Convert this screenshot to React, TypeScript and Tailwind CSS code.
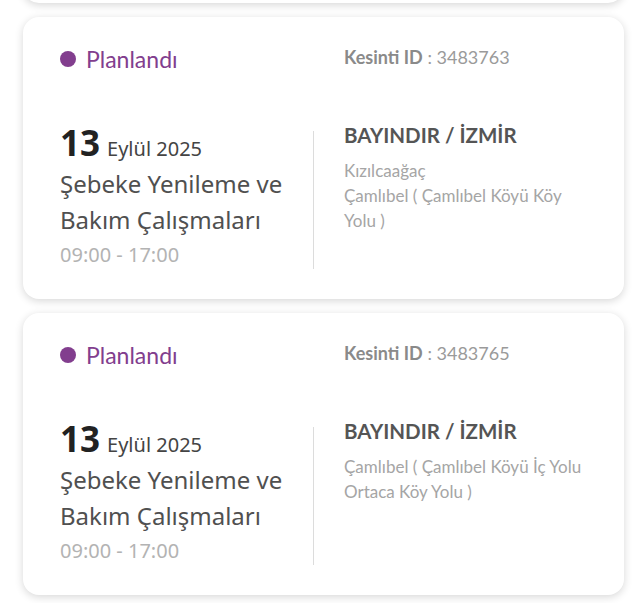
const outages = [
  {
    id: "3483763",
    day: "13",
    monthYear: "Eylül 2025",
    title: "Şebeke Yenileme ve Bakım Çalışmaları",
    hours: "09:00 - 17:00",
    place: "BAYINDIR / İZMİR",
    lines: ["Kızılcaağaç", "Çamlıbel ( Çamlıbel Köyü Köy Yolu )"],
  },
  {
    id: "3483765",
    day: "13",
    monthYear: "Eylül 2025",
    title: "Şebeke Yenileme ve Bakım Çalışmaları",
    hours: "09:00 - 17:00",
    place: "BAYINDIR / İZMİR",
    lines: ["Çamlıbel ( Çamlıbel Köyü İç Yolu Ortaca Köy Yolu )"],
  },
];

const geo = { fontFamily: '"Lato", "Noto Sans", sans-serif' };
const hum = { fontFamily: '"Noto Sans", "Open Sans", sans-serif' };

type Outage = (typeof outages)[number];

const OutageCard = ({ o }: { o: Outage }) => (
  <div className="w-[601px] h-[282px] rounded-2xl bg-white shadow-[0_2px_8px_rgba(0,0,0,0.16)] pl-[37px] pr-[30px] pt-[29px]">
    <div className="grid grid-cols-[284px_1fr]">
      <div className="flex items-center gap-[10px] h-[26px]" style={geo}>
        <span className="w-4 h-4 rounded-full bg-[#823e8e]" />
        <span className="text-[23px] text-[#823e8e] leading-none">Planlandı</span>
      </div>
      <div className="text-[18px] h-[26px] leading-[20px] text-[#9a9a9a] mt-[1px]" style={geo}>
        <span className="font-bold text-[#8a8a8a]">Kesinti ID</span> : {o.id}
      </div>
    </div>
    <div className="grid grid-cols-[253px_1fr] mt-[53px]">
      <div style={hum} className="pb-[2px]">
        <div className="flex items-baseline gap-[7px] leading-[34px]">
          <span className="text-[35px] font-bold text-[#222]">{o.day}</span>
          <span className="text-[20px] text-[#444]">{o.monthYear}</span>
        </div>
        <div className="text-[24px] leading-[36px] text-[#505050]">{o.title}</div>
        <div className="text-[20px] leading-[24px] text-[#b3b3b3] mt-[5px]">{o.hours}</div>
      </div>
      <div className="border-l border-[#dcdcdc] pl-[30px] mt-[5px]" style={geo}>
        <div className="text-[20.5px] font-bold text-[#555] leading-[30px] -mt-[11px]">{o.place}</div>
        <div className="mt-[8px] text-[17px] leading-[25px] text-[#a5a5a5]">
          {o.lines.map((l) => (
            <div key={l}>{l}</div>
          ))}
        </div>
      </div>
    </div>
  </div>
);

export default function App() {
  return (
    <div className="min-h-[603px] bg-white overflow-hidden">
      <div className="flex flex-col gap-[14px] pl-[23px]">
        <div className="w-[601px] h-[282px] -mt-[279px] rounded-2xl bg-white shadow-[0_2px_8px_rgba(0,0,0,0.16)]" />
        {outages.map((o) => (
          <OutageCard key={o.id} o={o} />
        ))}
      </div>
    </div>
  );
}
